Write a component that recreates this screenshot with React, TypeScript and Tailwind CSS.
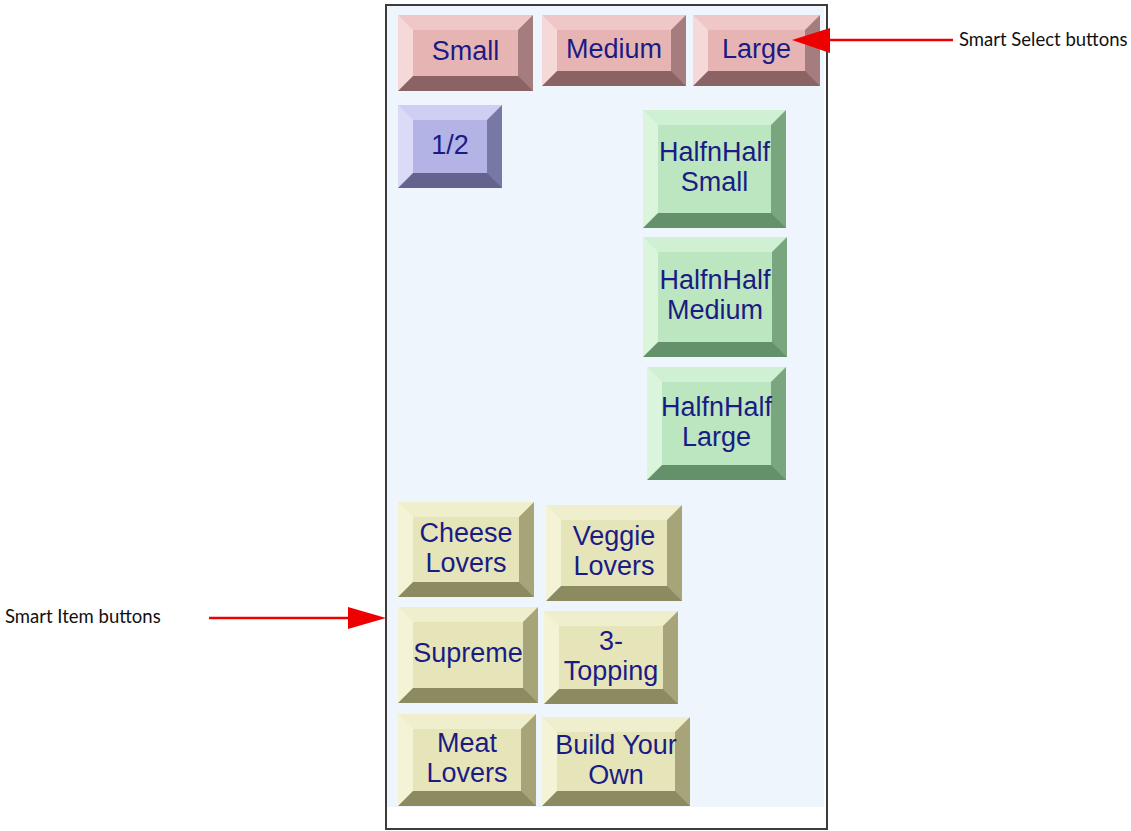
import type { ReactNode } from 'react';

type Tone = 'pink' | 'blue' | 'green' | 'yellow';

const TONES: Record<Tone, string> = {
  pink: 'border-t-[#efc7c7] border-l-[#f5d9d9] border-r-[#a67d7f] border-b-[#8b6365] bg-[#e7b4b4]',
  blue: 'border-t-[#cfcff3] border-l-[#dbdbf8] border-r-[#7878a6] border-b-[#63638e] bg-[#b3b3e6]',
  green: 'border-t-[#cff0d2] border-l-[#dbf5dd] border-r-[#7aa67f] border-b-[#64906a] bg-[#bbe6bf]',
  yellow: 'border-t-[#f0efcd] border-l-[#f4f3d6] border-r-[#a6a478] border-b-[#8c8a61] bg-[#e6e5ba]',
};

function Bevel({
  tone,
  className,
  children,
}: {
  tone: Tone;
  className: string;
  children: ReactNode;
}) {
  return (
    <div
      className={`flex shrink-0 items-center justify-center border-[15px] pb-[4px] text-center text-[27px] leading-[30px] whitespace-nowrap text-[#1b1b84] ${TONES[tone]} ${className}`}
    >
      <div>{children}</div>
    </div>
  );
}

export default function App() {
  return (
    <div className="relative h-[831px] w-[1131px] overflow-hidden bg-white font-['Liberation_Sans',Arial,sans-serif]">
      <div className="ml-[385px] pt-[4px]">
        <div className="h-[826px] w-[443px] border-2 border-[#3c3c3c] bg-white">
          <div className="h-[801px] w-[437px] bg-[#eef5fc] pl-[11px] pt-[9px]">
            {/* smart select row */}
            <div className="flex items-start">
              <Bevel tone="pink" className="h-[76px] w-[135px]">Small</Bevel>
              <Bevel tone="pink" className="ml-[9px] h-[71px] w-[144px]">Medium</Bevel>
              <Bevel tone="pink" className="ml-[7px] h-[71px] w-[127px]">Large</Bevel>
            </div>

            <div className="flex items-start">
              <Bevel tone="blue" className="mt-[14px] h-[83px] w-[104px]">1/2</Bevel>
              <div className="ml-[141px] mt-[19px] flex flex-col items-start">
                <Bevel tone="green" className="h-[118px] w-[143px]">
                  HalfnHalf
                  <br />
                  Small
                </Bevel>
                <Bevel tone="green" className="mt-[9px] h-[120px] w-[144px]">
                  HalfnHalf
                  <br />
                  Medium
                </Bevel>
                <Bevel tone="green" className="ml-[4px] mt-[10px] h-[113px] w-[139px]">
                  HalfnHalf
                  <br />
                  Large
                </Bevel>
              </div>
            </div>

            {/* smart items */}
            <div className="mt-[22px] flex items-start">
              <Bevel tone="yellow" className="h-[95px] w-[136px]">
                Cheese
                <br />
                Lovers
              </Bevel>
              <Bevel tone="yellow" className="ml-[12px] mt-[3px] h-[96px] w-[136px]">
                Veggie
                <br />
                Lovers
              </Bevel>
            </div>
            <div className="mt-[6px] flex items-start">
              <Bevel tone="yellow" className="h-[96px] w-[140px]">Supreme</Bevel>
              <Bevel tone="yellow" className="ml-[6px] mt-[4px] h-[93px] w-[134px]">
                3-
                <br />
                Topping
              </Bevel>
            </div>
            <div className="mt-[10px] flex items-start">
              <Bevel tone="yellow" className="h-[92px] w-[138px]">
                Meat
                <br />
                Lovers
              </Bevel>
              <Bevel tone="yellow" className="ml-[6px] mt-[3px] h-[89px] w-[148px]">
                Build Your
                <br />
                Own
              </Bevel>
            </div>
          </div>
        </div>
      </div>

      {/* callouts */}
      <span className="absolute left-[959px] top-[27px] font-['Lato',sans-serif] text-[18.5px] leading-[24px] text-[#111]">
        Smart Select buttons
      </span>
      <span className="absolute left-[5px] top-[604px] font-['Lato',sans-serif] text-[18.5px] leading-[24px] text-[#111]">
        Smart Item buttons
      </span>
      <svg className="pointer-events-none absolute inset-0" width="1131" height="831" viewBox="0 0 1131 831">
        <line x1="826" y1="40" x2="953" y2="40" stroke="#ee0000" strokeWidth="2.5" />
        <polygon points="792,40 830,28 830,53" fill="#ee0000" />
        <line x1="209" y1="618" x2="350" y2="618" stroke="#ee0000" strokeWidth="2.5" />
        <polygon points="386,618 348,607 348,629" fill="#ee0000" />
      </svg>
    </div>
  );
}
